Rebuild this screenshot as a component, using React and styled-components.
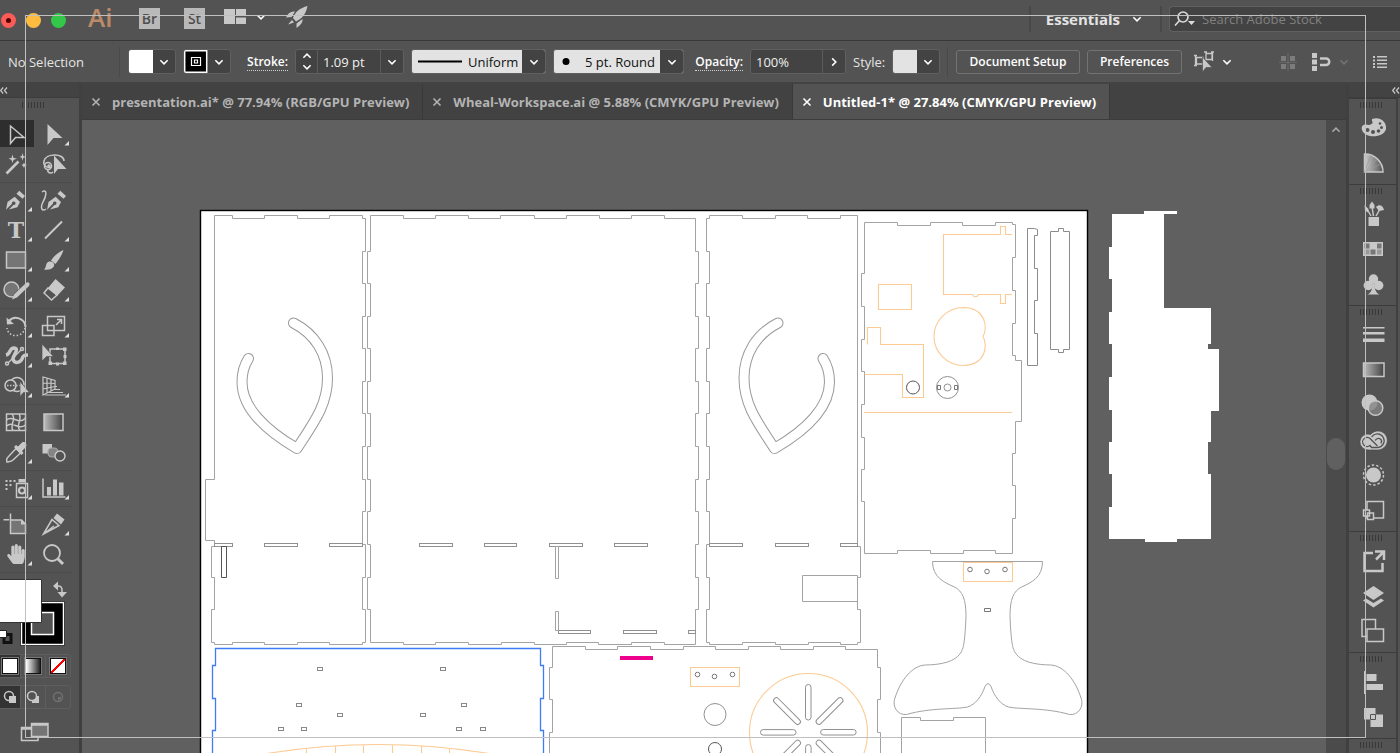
import React from 'react';
import styled, { createGlobalStyle } from 'styled-components';
import { FaHandPaper } from 'react-icons/fa';

const GlobalStyle = createGlobalStyle`
  * { box-sizing: border-box; }
  body {
    margin: 0;
    overflow: hidden;
    background: #535353;
    color: #e4e4e4;
    font-family: 'Open Sans', 'Noto Sans', sans-serif;
    font-size: 13px;
  }
  button, input, select {
    margin: 0;
    padding: 0;
    border: 0;
    border-radius: 0;
    background: none;
    color: inherit;
    font: inherit;
  }
  svg { display: block; }
`

const Screen = styled.div`
  position: relative;
  display: flex;
  flex-direction: column;
  height: 100vh;
  overflow: hidden;
`
const Guide = styled.div`
  position: absolute;
  top: 15px;
  right: 34px;
  bottom: 15px;
  left: 25px;
  border: 1px solid #c0c0c0;
  pointer-events: none;
`
const Defs = styled.svg`
  position: absolute;
  width: 0;
  height: 0;
`
const IconButton = styled.button`
  display: flex;
  align-items: center;
  justify-content: center;
  flex: none;
`
const Spacer = styled.div`
  flex: 1;
`

/* title bar */
const TitleBar = styled.header`
  display: flex;
  align-items: center;
  flex: none;
  height: 41px;
  padding: 0 0 3px 1px;
  border-bottom: 1px solid #383838;
`
const Lights = styled.div`
  display: flex;
  gap: 10px;
  padding-top: 3px;
`
const Light = styled.button`
  display: flex;
  align-items: center;
  justify-content: center;
  width: 15px;
  height: 15px;
  border-radius: 50%;
  background: ${({ $color }) => $color};
`
const LightDot = styled.span`
  width: 5px;
  height: 5px;
  border-radius: 50%;
  background: #4d0000;
`
const Logo = styled.div`
  width: 51px;
  margin-left: 22px;
  padding-bottom: 4px;
  color: #bd8a68;
  font-size: 26px;
  font-weight: 600;
  line-height: 32px;
`
const AppButtons = styled.div`
  display: flex;
  gap: 24px;
  margin-right: 19px;
`
const AppButton = styled.button`
  width: 21px;
  height: 21px;
  background: #b9b9b9;
  color: #4d4d4d;
  font-size: 14px;
  font-weight: 600;
  line-height: 21px;
  text-align: center;
`
const TitleButton = styled(IconButton)`
  gap: 10px;
  margin-right: 20px;
  padding-bottom: 4px;
`
const Workspace = styled.button`
  display: flex;
  align-items: center;
  gap: 12px;
  height: 26px;
  padding: 0 18px 0 15px;
  border: solid #484848;
  border-width: 0 2px;
  font-size: 15px;
  font-weight: 700;
`
const Search = styled.label`
  display: flex;
  align-items: center;
  flex: none;
  gap: 6px;
  width: 231px;
  height: 26px;
  margin-left: 7px;
  padding-left: 4px;
  border: 1px solid #606060;
  border-right: 0;
  border-radius: 4px 0 0 4px;
  background: #434343;
`
const SearchInput = styled.input`
  flex: 1;
  min-width: 0;
  &::placeholder {
    color: #808080;
    opacity: 1;
  }
`

/* control bar */
const ControlBar = styled.div`
  display: flex;
  align-items: center;
  flex: none;
  gap: 7px;
  height: 43px;
  padding-left: 8px;
  border-bottom: 2px solid #434343;
`
const Label = styled.label`
  flex: none;
  width: ${({ $width }) => $width}px;
  text-align: ${({ $align }) => $align || 'right'};
  white-space: nowrap;
`
const LinkLabel = styled(Label)`
  color: #fff;
  font-size: 12px;
  font-weight: 600;
  span { border-bottom: 1px dotted #cfcfcf; }
`
const Divider = styled.div`
  flex: none;
  width: 2px;
  height: 30px;
  border-left: 1px solid #494949;
`
const Field = styled.div`
  display: flex;
  flex: none;
  width: ${({ $width }) => $width}px;
  height: 25px;
  border: 1px solid #606060;
  border-radius: 3px;
  background: #434343;
  overflow: hidden;
`
const FieldInput = styled.input`
  flex: 1;
  min-width: 0;
  padding-left: 5px;
  color: #f0f0f0;
`
const FieldButton = styled(IconButton)`
  width: 23px;
  border-left: 1px solid #5c5c5c;
`
const Stepper = styled.div`
  display: flex;
  flex-direction: column;
  width: 22px;
  border-right: 1px solid #5c5c5c;
  ${IconButton} { flex: 1; }
`
const SwatchButton = styled.button`
  display: flex;
  align-items: center;
  justify-content: space-between;
  flex: none;
  width: 48px;
  height: 25px;
  padding-right: 6px;
  border: 1px solid #606060;
  border-radius: 3px;
  background: #434343;
  overflow: hidden;
`
const Picker = styled.div`
  display: grid;
  grid-template-columns: 56px 1fr 23px;
  align-items: center;
  flex: none;
  width: ${({ $width }) => $width}px;
  height: 25px;
  border: 1px solid #606060;
  border-radius: 3px;
  background: #e3e3e3;
  overflow: hidden;
  > svg {
    grid-area: 1 / 1;
    z-index: 1;
    pointer-events: none;
  }
`
const PickerSelect = styled.select`
  grid-area: 1 / 1 / 2 / 4;
  height: 23px;
  padding-left: ${({ $indent }) => $indent}px;
  appearance: none;
  color: #111;
`
const PickerArrow = styled.span`
  grid-area: 1 / 3;
  display: flex;
  align-items: center;
  justify-content: center;
  height: 23px;
  background: #434343;
  pointer-events: none;
`
const TextButton = styled.button`
  flex: none;
  width: ${({ $width }) => $width}px;
  height: 24px;
  border: 1px solid #737373;
  border-radius: 3px;
  color: #fff;
  font-size: 12px;
  font-weight: 600;
`
const BarTools = styled.div`
  display: flex;
  align-items: center;
  gap: ${({ $gap }) => $gap}px;
  padding: 0 13px 0 4px;
`
const SnapGroup = styled.div`
  display: flex;
  align-items: center;
  gap: 8px;
  padding-right: 9px;
`

/* body */
const Body = styled.div`
  display: flex;
  flex: 1;
  min-height: 0;
`
const PanelHead = styled.div`
  display: flex;
  justify-content: ${({ $right }) => ($right ? 'flex-end' : 'flex-start')};
  height: 14px;
  padding-top: 3px;
  border-bottom: 1px solid #3c3c3c;
  background: #434343;
`
const Grip = styled.div`
  width: 24px;
  height: 6px;
  background: repeating-linear-gradient(90deg, #383838 0 1px, #535353 1px 3px);
`
const ToolPanel = styled.aside`
  flex: none;
  width: 82px;
  border-right: 3px solid #404040;
  overflow: hidden;
  > ${Grip} { margin: 4px 0 11px 22px; }
`
const ToolGroup = styled.div`
  display: grid;
  grid-template-columns: 37px 37px;
  width: 72px;
  margin-bottom: 2px;
  padding-bottom: 3px;
  border-bottom: 1px solid #4b4b4b;
`
const ToolButton = styled.button`
  width: 34px;
  height: 30px;
  background: ${({ $active }) => ($active ? 'linear-gradient(#2e2e2e, #2e2e2e) 0 1px / 34px 27px no-repeat' : 'none')};
`
const Modes = styled.div`
  display: flex;
  width: 71px;
  height: 24px;
  margin-bottom: 7px;
  border: 1px solid #5e5e5e;
  border-left: 0;
  border-radius: 0 3px 3px 0;
`
const Mode = styled.button`
  display: flex;
  align-items: center;
  justify-content: center;
  flex: ${({ $active }) => ($active ? '0 0 21px' : '1')};
  border-right: 1px solid #5e5e5e;
  background: ${({ $active }) => ($active ? '#333' : 'none')};
  &:last-child { border-right: 0; }
`
const ModeSwatch = styled.span`
  width: 16px;
  height: 16px;
  border: 1px solid #111;
  outline: 1px solid #777;
  background: ${({ $fill }) => $fill};
`
const Center = styled.main`
  display: flex;
  flex-direction: column;
  flex: 1;
  min-width: 0;
`
const Tabs = styled.nav`
  display: flex;
  flex: none;
  height: 36px;
  border-bottom: 1px solid #3c3c3c;
  background: #424242;
`
const Tab = styled.div`
  display: flex;
  align-items: center;
  padding: 0 13px 0 9px;
  border-right: 1px solid #393939;
  background: ${({ $active }) => ($active ? '#535353' : 'none')};
  color: ${({ $active }) => ($active ? '#fff' : '#b4b4b4')};
`
const TabLink = styled.a`
  padding-left: 11px;
  color: inherit;
  font-weight: 700;
  text-decoration: none;
  white-space: nowrap;
`
const Stage = styled.div`
  display: flex;
  flex: 1;
  min-height: 0;
`
const Canvas = styled.div`
  flex: 1;
  min-width: 0;
  background: #606060;
  overflow: hidden;
`
const ScrollTrack = styled.div`
  display: flex;
  flex-direction: column;
  align-items: center;
  flex: none;
  width: 20px;
  padding-top: 5px;
  background: #4b4b4b;
`
const ScrollThumb = styled.div`
  width: 18px;
  height: 32px;
  margin-top: 303px;
  border-radius: 9px;
  background: #606060;
`
const Dock = styled.aside`
  flex: none;
  width: 54px;
  border-left: 3px solid #404040;
  overflow: hidden;
`
const DockBody = styled.div`
  width: 49px;
  border-right: 2px solid #404040;
`
const DockGroup = styled.div`
  display: flex;
  flex-direction: column;
  align-items: center;
  padding: 3px 1px 3px 0;
  border-top: 1px solid #3c3c3c;
  > ${Grip} { margin-bottom: 3px; }
`
const DockButton = styled.button`
  width: 34px;
  height: 35px;
`

const C = '#c8c8c8'

const Chevron = ({ dir = 'down', color = '#fff', w = 10 }) => {
  const paths = {
    down: 'M1 3.5 5 7.5 9 3.5',
    up: 'M1 7.5 5 3.5 9 7.5',
    right: 'M3 1.5 7 5.5 3 9.5',
  }
  return (
    <svg width={w} height={w} viewBox='0 0 10 11' fill='none' stroke={color} strokeWidth='1.7'>
      <path d={paths[dir]} />
    </svg>
  )
}

const Collapse = () => (
  <svg width='8' height='7' viewBox='0 0 8 7' fill='none' stroke={C} strokeWidth='1.2'>
    <path d='M3.2 .5 .6 3.5 3.2 6.500M7 .5 4.400 3.500 7 6.500' />
  </svg>
)

const Nib = () => (
  <g fill={C}>
    <path fillRule='evenodd' d='M6 25 7.5 17 14.7 11.7 20 17 17.3 22.2 9 24.6 13.3 20A1.8 1.8 0 1 0 12 18.8L7.2 23.6Z' />
    <path d='M16.5 8.7 19.3 5.7 25 11 22.6 13.7Z' />
  </g>
)

const line = { fill: 'none', stroke: C, strokeWidth: 1.5 }

/* tool drawings, one 34x30 cell each; `more` adds the flyout corner */
const toolGroups = [
  [
    { name: 'Selection', active: true, art: <path {...line} d='M10.5 7V24.5L15.5 18.5H24Z' /> },
    { name: 'Direct Selection', more: true, art: <path fill={C} d='M10.5 5V26L16.5 19H25.5Z' /> },
    { name: 'Magic Wand', art: (
      <g fill={C}>
        <path d='M6.5 24.5 18.5 12.5' stroke={C} strokeWidth='2.6' />
        <path d='M12.5 5.5 13.5 9 17 9.5 13.5 11 12.5 14 11.5 11 8.5 9.5 11.5 9ZM22.5 4 23.3 7 26 8 23.3 8.8 22.5 11.5 21.7 8.8 19.5 8 21.7 7ZM24 13.5 24.8 15.3 27 16 24.8 17 24 19 23 17 21.5 16 23.2 15.3Z' />
      </g>
    ) },
    { name: 'Lasso', art: (
      <g {...line}>
        <path d='M14 18.5C9 19 6 16 7 12 9 4 27 4 27 12' />
        <circle cx='11' cy='17' r='3.5' />
        <circle cx='12' cy='17' r='1' />
        <path d='M11 20.5C10 24 14 25 16 23' />
        <path fill={C} stroke='none' d='M17 6.5V25L21 20H29.5Z' />
      </g>
    ) },
  ],
  [
    { name: 'Pen', more: true, art: <Nib /> },
    { name: 'Curvature', art: (
      <g>
        <g transform='translate(4)'><Nib /></g>
        <path {...line} d='M5 7C11 3 9 12 6 17 3 23 5 27 9 24' />
      </g>
    ) },
    { name: 'Type', more: true, art: <text x='16' y='23' textAnchor='middle' fill={C} fontFamily='DejaVu Serif' fontWeight='700' fontSize='22'>T</text> },
    { name: 'Line Segment', more: true, art: <path {...line} strokeWidth='1.9' d='M8 23.5 25 6.5' /> },
    { name: 'Rectangle', more: true, art: <rect {...line} fill='#757575' x='6.5' y='7' width='19' height='16' /> },
    { name: 'Paintbrush', more: true, art: (
      <g fill={C}>
        <path d='M7 24.5C10 22 8 18 12 16.5 16 16 18.5 19 16.5 22 14 25 10 25 7 24.5Z' />
        <path d='M14 15.5C18 10 22 7 26.5 5 25 10 22 14.5 18.5 19Z' />
      </g>
    ) },
    { name: 'Blob Brush', more: true, art: (
      <g>
        <circle {...line} fill='#757575' cx='11.5' cy='14.5' r='7.5' />
        <path d='M14.5 22.5 27.5 10' stroke='#535353' strokeWidth='6' />
        <path d='M12 24.5 14 19.5 26 8C28.5 6 31 9 28.5 11.5L17 22.5Z' fill={C} />
      </g>
    ) },
    { name: 'Eraser', more: true, art: (
      <g>
        <path d='M11 13 18.5 4 28 12.5 20 21Z' fill={C} />
        <path {...line} d='M11 13 7 18 14.5 25 20 20Z' />
      </g>
    ) },
  ],
  [
    { name: 'Rotate', more: true, art: (
      <g {...line}>
        <path d='M9 10C14 4 25 7 25.5 16' strokeWidth='2' />
        <path d='M25 17C23 27 8 27 7 17' strokeDasharray='1.5 2' />
        <path fill={C} stroke='none' d='M6.5 6.5 7 13.5 14 13Z' />
      </g>
    ) },
    { name: 'Scale', more: true, art: (
      <g {...line}>
        <path d='M10.5 5.5H27.5V19.5H10.5ZM5.5 14.5H17V24.5H5.5Z' />
        <path d='M19 14 24 9M20 8.5H24.5V13' />
      </g>
    ) },
    { name: 'Width', more: true, art: (
      <g fill='none'>
        <path stroke={C} strokeWidth='3.5' d='M6 14C11 13 9 7 14 7 20 8 13 14 13 18 14 23 20 22 22 18 23 14 25 14 28 14' />
        <path stroke={C} strokeWidth='1.2' d='M7 23 22 8' />
        <circle {...line} fill='#535353' cx='7' cy='22.5' r='1.5' />
        <circle {...line} fill='#535353' cx='22' cy='8' r='1.5' />
      </g>
    ) },
    { name: 'Free Transform', art: (
      <g>
        <path {...line} d='M13 8H28V22.5H13Z' />
        <path d='M11.5 20.5h3.5v3.5h-3.5zM26 20.5h3.5v3.5H26zM26 6.5h3.5V10H26zM19 6.5h3V9h-3zM19 21.5h3v3h-3zM26.5 14h3v3h-3z' fill={C} />
        <path d='M5 3V20L9.5 15.5H16.5Z' fill={C} stroke='#535353' strokeWidth='.7' />
      </g>
    ) },
    { name: 'Shape Builder', more: true, art: (
      <g {...line}>
        <circle cx='17' cy='13.5' r='7' />
        <circle cx='10.5' cy='14.5' r='5.5' fill='#535353' />
        <path d='M7 14.5H20' strokeDasharray='1.5 1.5' />
        <path fill={C} stroke='#535353' strokeWidth='.7' d='M20 10.5V25.5L23.5 21.5H29.5Z' />
      </g>
    ) },
    { name: 'Perspective Grid', more: true, art: (
      <g {...line} strokeWidth='1.2'>
        <path d='M6 6V24L18 18V9.5ZM6 12 18 12.5M6 18 18 15.5M10 7V22M14 8V20' />
        <path d='M18 15.5H20M17 18.5H23M12 21.5H26M8 24H29' />
      </g>
    ) },
  ],
  [
    { name: 'Mesh', art: (
      <g {...line}>
        <path d='M6.5 7H25.5V23.5H6.5Z' />
        <path d='M6.5 13C13 7 18 19 25.5 11M6.5 19C13 13 18 24 25.5 18M12 7C17 12 9 18 13 23.5M19 7C23 12 15 18 20 23.5' />
      </g>
    ) },
    { name: 'Gradient', art: <rect x='7' y='7' width='19' height='16.5' fill='url(#dark)' stroke={C} strokeWidth='1.5' /> },
    { name: 'Eyedropper', more: true, art: (
      <g>
        <path {...line} d='M7 25C6 22 7 21 9 19L16 11.5 20.5 16 13 23C11 25 9 24.5 7 25Z' />
        <path fill={C} d='M14 10 16 8 18 9.5 22 5.5C25 4 27.5 7 26 10L22 14 23.5 16 21.5 18Z' />
      </g>
    ) },
    { name: 'Blend', art: (
      <g>
        <path fill={C} d='M5.5 7H15V16.5H5.5Z' />
        <rect x='11' y='11' width='10' height='9' rx='4' fill='#858585' stroke='#a8a8a8' strokeWidth='1.2' />
        <circle {...line} fill='#535353' cx='23' cy='19' r='5' />
      </g>
    ) },
  ],
  [
    { name: 'Symbol Sprayer', more: true, art: (
      <g fill={C}>
        <path d='M5.5 7h2v2h-2zM9.5 7h2v2h-2zM13.5 7h2v2h-2zM5.5 11h2v2h-2zM9.5 11h2v2h-2zM5.5 15h2v2h-2zM18.5 6H25v3.5h-6.5z' />
        <path {...line} d='M16.5 10.5H27.5V24.5H16.5Z' />
        <circle cx='22' cy='17.5' r='3' fill='none' stroke={C} strokeWidth='2.2' />
      </g>
    ) },
    { name: 'Column Graph', more: true, art: (
      <g fill={C}>
        <path {...line} d='M6 5.5V24H28.5' />
        <path d='M10 14h4v8.5h-4zM16 6.5h4v16h-4zM22 9.5h4.5v13H22z' />
      </g>
    ) },
  ],
  [
    { name: 'Artboard', art: (
      <g {...line}>
        <path fill='#757575' d='M10.5 11H21.5L25.5 15V24.5H10.5Z' />
        <path d='M10.5 4.5V11M3.5 10.7H9' />
        <path fill={C} stroke='none' d='M21 11 25.5 15.5H21Z' />
      </g>
    ) },
    { name: 'Slice', more: true, art: (
      <g>
        <path {...line} d='M6.5 25 15 10.5 22 16.5ZM6.5 25 17 17' />
        <path fill={C} d='M16.5 9 20 4.5 27.5 10.5 24 15.5Z' />
      </g>
    ) },
    { name: 'Hand', more: true, art: <FaHandPaper x='6' y='5' size={20} color={C} /> },
    { name: 'Zoom', art: (
      <g {...line}>
        <circle cx='15' cy='14' r='8' strokeWidth='1.8' />
        <path d='M20.5 19.5 26 25' strokeWidth='3' />
      </g>
    ) },
  ],
]

const dockGroups = [
  [
    { name: 'Color', art: (
      <g>
        <path fill={C} d='M17 8C26 5 32 12 31 18 29 26 16 27 10 23 5 19 6 13 11 13.5 16 15 19 12 17 10Z' />
        <g fill='#535353'>
          <circle cx='12.5' cy='19' r='2' /><circle cx='18' cy='21' r='2' /><circle cx='23.5' cy='20' r='1.8' /><circle cx='26.5' cy='16.5' r='1.5' /><circle cx='25' cy='12.5' r='1.3' />
        </g>
      </g>
    ) },
    { name: 'Color Guide', art: (
      <g>
        <path d='M9.5 26V8A18 18 0 0 1 28 26Z' fill='url(#fan)' stroke={C} strokeWidth='1.5' />
        <path d='M9.5 26 16 9M9.5 26 22 13M9.5 26 26 18' stroke='#999' strokeWidth='.7' />
      </g>
    ) },
  ],
  [
    { name: 'Brushes', art: (
      <g fill={C}>
        <path d='M13.5 20H24V29H13.5Z' />
        <path d='M16 19 12 12M18.5 19 17 10M21 19 25 12' stroke={C} strokeWidth='1.5' />
        <path d='M9.5 8 13.5 12 13 15.5 10 13.5ZM14.5 8 17 4.5 19.5 8V11.5H14.5ZM21 10C24 7 28 8 29 13L24 14Z' />
      </g>
    ) },
    { name: 'Swatches', art: (
      <g>
        <path fill={C} d='M8 10H28V24H8Z' />
        <path fill='#777' d='M9.5 11.5h5v5h-5zM22 11.5h4.5v5H22zM15.5 17.5h5v5h-5z' />
        <path fill='#999' d='M9.5 17.5h5v5h-5zM22 17.5h4.5v5H22z' />
      </g>
    ) },
    { name: 'Symbols', art: (
      <g fill={C}>
        <circle cx='18.5' cy='12' r='4.7' /><circle cx='13.3' cy='18.5' r='4.7' /><circle cx='23.7' cy='18.5' r='4.7' />
        <path d='M17.5 15H19.5C19.5 22 20.5 25.5 24.5 27.5H12.5C16.5 25.5 17.5 22 17.5 15Z' />
      </g>
    ) },
  ],
  [
    { name: 'Stroke', art: <path fill={C} d='M8 9H29.5V10.5H8ZM8 14H29.5V16.5H8ZM8 20.5H29.5V24H8Z' /> },
    { name: 'Gradient panel', art: <rect x='8.5' y='10' width='20.5' height='13.5' fill='url(#dark)' stroke={C} strokeWidth='1.5' /> },
    { name: 'Transparency', art: (
      <g>
        <circle cx='14.5' cy='14.5' r='8' fill={C} />
        <circle cx='20.5' cy='20' r='7.3' fill='#858585' fillOpacity='.8' stroke={C} strokeWidth='1.5' />
      </g>
    ) },
    { name: 'Libraries', art: (
      <g fill='none' strokeLinecap='round'>
        <path fill={C} stroke='#3f3f3f' strokeWidth='.6' d='M14 27A8 8 0 1 1 15.5 11.5 9.500 9.500 0 1 1 23 27Z' />
        <path stroke='#535353' strokeWidth='1.3' d='M22 22.500 15.500 16A4.500 4.500 0 1 0 15 22.500L16.500 24.500H23A6.800 6.800 0 1 0 17 13.500M20.500 17C24 13.500 28 17 26 20' />
      </g>
    ) },
    { name: 'Appearance', art: (
      <g>
        <circle cx='18.5' cy='17' r='7.5' fill={C} />
        <circle cx='18.5' cy='17' r='10' {...line} strokeDasharray='2.5 2' />
      </g>
    ) },
    { name: 'Graphic Styles', art: (
      <g {...line}>
        <path d='M12 8.5H28.5V25H12Z' />
        <path fill='#535353' d='M12.5 20H18.5V26.5H12.5ZM8.5 17H14.5V23H8.5Z' />
      </g>
    ) },
  ],
  [
    { name: 'Asset Export', art: <path fill='none' stroke={C} strokeWidth='2.5' d='M18 9H9.5V27H27.5V19M20 7.5H29V16M29 7.5 21 15.5' /> },
    { name: 'Layers', art: (
      <g fill={C}>
        <path d='M18.5 7 29 14 18.5 21 8 14Z' />
        <path d='M8 21.5 11 19.5 18.5 24 26 19.5 29 21.5 18.5 28.5Z' />
      </g>
    ) },
    { name: 'Artboards', art: <path {...line} fill='#535353' d='M12 22.5H7V5.5H20.5V15M12 15H28.5V27.5H12Z' /> },
  ],
  [
    { name: 'Align', art: <path fill={C} d='M9 6H10.5V29H9ZM11.5 9H21.5V16H11.5ZM11.5 19H28V25H11.5Z' /> },
    { name: 'Pathfinder', art: (
      <g>
        <path fill={C} d='M9 8H20.5V19.5H9ZM15.5 14.5H28V27H15.5Z' />
        <path fill={C} stroke='#535353' d='M15.5 14.5H20.5V19.5H15.5Z' />
      </g>
    ) },
  ],
  [],
]

/* finger joints shared by the three tall panels */
const joints = [251, 283, 316, 348, 381, 413, 446, 479, 511, 544, 577, 609]
const wall = (a, b, up) => {
  const ys = up ? [...joints].reverse() : joints
  return ys.map((y, i) => `V${y}H${i % 2 ? a : b}`).join('')
}

const leftPanel = `M214 215H232V218H264V215H297V218H329V215H362V218H365${wall(365, 362)}V642H362V644H329V642H297V644H264V642H232V644H214V642H211V609H214V577H211V546H214V540H205V479H214Z`
const midPanel = `M370 215H403V218H435V215H468V218H500V215H534V218H566V215H599V218H631V215H664V218H695${wall(695, 698)}V644H664V642H631V644H598V642H566V644H534V642H501V644H468V642H435V644H403V642H370${wall(370, 367, true)}Z`
const rightPanel = `M709 215H742V218H775V215H807V218H840V215H857V546H860V577H857V609H860V642H857V644H840V642H808V644H775V642H742V644H709V642H706${wall(706, 709, true)}V218H709Z`
const sidePanel = 'M864 222H897V225H930V222H962V225H995V222H1012V224H1015V257H1012V290H1015V323H1012V355H1015V360H1021V421H1015V453H1012V485H1015V518H1012V553H995V550H963V553H930V550H897V553H864V501H861V469H864V437H861V404H864V371H861V339H864V306H861V273H864Z'
const handle = 'M293.5 323C315 334 327.5 354 327.5 378C327.5 404 315 421 297 448.5C265 430 242 407 242 382C242 372 245 364 248.5 358.5'
const foot = 'M932 561H1042C1042 577 1031 582 1021 586.5C1013 590.5 1009.5 599 1009.5 615C1010 630 1011 640 1012 645C1014 656 1023 664 1050 664.5C1063 665 1075 679 1081 699C1083 706 1078 715 1069 714C1045 707 1020 709 1008 706.5C1000 704 994 696 990.5 686Q987.5 680 984.5 686C981 696 975 704 967 706.5C955 709 930 707 906 714C897 715 892 706 894 699C900 679 912 665 925 664.5C952 664 961 656 963 645C964 640 965 630 965.5 615C965.5 599 962 590.5 954 586.5C944 582 932 577 932 561Z'
const slots = [
  [214, 543, 18], [264, 543, 33], [329, 543, 33], [419, 543, 33], [484, 543, 32], [549, 543, 33], [614, 543, 33],
  [709, 543, 33], [775, 543, 33], [840, 543, 17], [558, 630, 32], [623, 630, 33], [688, 630, 7],
]
const pegs = [
  [320, 669], [443, 669], [299, 705], [464, 705], [340, 715], [423, 715], [281, 729], [304, 729], [459, 729], [483, 729],
]
const screws = [[970, 569.5], [987, 571.5], [1005, 569.5], [697.5, 674.5], [714.5, 676.5], [732.5, 674.5]]

const Handle = () => (
  <g fill='none' strokeLinecap='round' strokeLinejoin='round'>
    <path d={handle} stroke='#999' strokeWidth='11' />
    <path d={handle} stroke='#fff' strokeWidth='9' />
  </g>
)

const Artwork = () => (
  <svg width='1244' height='633' viewBox='82 120 1244 633'>
    <path d='M1112 214H1144V211H1177V214H1164V308H1211V344H1208V349H1219V411H1211V442H1208V474H1211V507H1208V507H1211V539H1177V542H1145V539H1109V507H1112V474H1109V442H1112V410H1109V377H1112V344H1109V312H1112V279H1109V247H1112Z' fill='#fff' />
    <rect x='200.5' y='210.5' width='887' height='560' fill='#fff' stroke='#000' strokeWidth='1.4' />
    <g fill='none' stroke='#a3a3a3' transform='translate(.5 .5)'>
      <path d={leftPanel} />
      <path d={midPanel} />
      <path d={rightPanel} />
      <path d={sidePanel} />
      {slots.map(([x, y, w]) => <rect key={`${x}-${y}`} x={x} y={y} width={w} height='3' stroke='#909090' />)}
      <path d='M221 546H226V577H221Z' stroke='#555' />
      <path d='M555 546H558V578H555ZM555 611H558V630H555ZM802 575H857V601H802Z' />
      <path d='M1027 228H1034L1037 229V235H1034V268H1037V300H1034V333H1037V365H1027Z' stroke='#8c8c8c' />
      <path d='M1050 231H1058V228H1063V231H1069V349H1063V352H1058V349H1050Z' stroke='#8c8c8c' />
      <path d={foot} />
      <path d='M901 760V717H920V720H953V717H985V760' />
      <path d='M549 760V732H552V699H549V667H552V646H585V649H617V646H650V649H683V646H715V649H748V646H780V649H813V646H845V649H877V667H880V699H877V732H880V760' />
      <path d='M984 608H990V611H984Z' stroke='#777' />
      {pegs.map(([x, y]) => <rect key={`${x}-${y}`} x={x - 3} y={y - 2} width='5' height='3' stroke='#888' />)}
    </g>
    <Handle />
    <g transform='translate(1071.5) scale(-1 1)'><Handle /></g>
    <g fill='none' stroke='#909090'>
      <circle cx='913' cy='387.5' r='6.5' stroke='#555' />
      <circle cx='947.5' cy='387.5' r='11' />
      <circle cx='947.5' cy='387.5' r='3.5' />
      <path d='M937.5 385.5h3v4h-3zM954.5 385.5h3v4h-3z' stroke='#777' />
      <circle cx='715' cy='714.5' r='11' />
      <circle cx='715' cy='749' r='6.5' stroke='#555' />
      {screws.map(([x, y]) => <circle key={x} cx={x} cy={y} r='2.3' stroke='#777' />)}
      {[0, 45, 90, 135, 180, 225, 270, 315].map((deg) => (
        <rect key={deg} x='805.5' y='684.5' width='5.5' height='35.5' rx='2.7' transform={`rotate(${deg} 808.3 732.3)`} />
      ))}
    </g>
    <g fill='none' stroke='#fccb94' strokeWidth='1.1'>
      <path d='M1012 234.5H1005.5V226.5H1000.5V234.5H943.5V294.5H972.5L974 296.5H977L978.5 294.5H1000.5V303.5H1005.5V294.5H1012' />
      <path d='M878.5 284.5H911.5V309.5H878.5ZM867.5 344.5V327.5H880.5V344.5H923.5V397.5H902.5V374.5H864.5M864 412.5H1012' />
      <path d='M983 336.5C988 328 986 308 963.5 307.5C947 307.5 934 321 934 336.5C934 352 947 365.5 963.5 365.5C986 365 988 345 983 336.5Z' />
      <path d='M963.5 562.5H1012.5V581.5H963.5ZM690.5 667.5H739.500V686.5H690.5Z' />
      <circle cx='808.5' cy='732.5' r='59' />
      <path d='M258 755Q378 734 498 755M306.5 748V760M335.5 746V760M363.5 745V760M392.5 745V760M421.5 746V760M449.5 748V760' />
    </g>
    <path d='M620 656H653V660H620Z' fill='#ec008c' />
    <path d='M212.5 760V730.5H215.5V698.5H212.5V665.5H215.5V648.5H540.5V665.5H543.5V698.5H540.5V730.5H543.5V760' fill='none' stroke='#3f7cf6' strokeWidth='1.3' />
  </svg>
)

const ColorBox = () => (
  <svg width='74' height='79' viewBox='0 2 74 79'>
    <path d='M56 13H58Q62 13 62 17V21' {...line} />
    <path d='M53 13 58 8.5V17.5ZM57.5 19H67L62 24.5Z' fill={C} />
    <path d='M21.5 29.5H63.5V71.5H21.5ZM31.5 39.5V61.5H53.5V39.5Z' fillRule='evenodd' fill='#000' stroke='#fff' strokeWidth='1.5' />
    <path d='M20.5 28.5H64.5V72.5H20.5Z' fill='none' stroke='#222' strokeWidth='.7' />
    <path d='M-2 6.5H41.5V49.5H-2Z' fill='#fff' stroke='#333' />
    <path d='M4 61.5H11V69.5H4Z' fill='none' stroke='#111' strokeWidth='3' />
    <path d='M-1 57.5H6.5V64.5H-1Z' fill='#fff' stroke='#222' />
  </svg>
)

const CloseIcon = () => (
  <svg width='10' height='10' viewBox='0 0 10 10' fill='none' stroke='currentColor' strokeWidth='1.6'>
    <path d='M1.5 1.5 8.5 8.5M8.5 1.5 1.5 8.5' />
  </svg>
)

const tabs = [
  { title: 'presentation.ai* @ 77.94% (RGB/GPU Preview)' },
  { title: 'Wheal-Workspace.ai @ 5.88% (CMYK/GPU Preview)' },
  { title: 'Untitled-1* @ 27.84% (CMYK/GPU Preview)', active: true },
]

const App = () => (
  <Screen>
    <GlobalStyle />
    <Defs>
      <defs>
        <linearGradient id='dark'><stop stopColor='#bbb' /><stop offset='1' stopColor='#444' /></linearGradient>
        <linearGradient id='fan'><stop stopColor='#ccc' /><stop offset='1' stopColor='#555' /></linearGradient>
      </defs>
    </Defs>
    <TitleBar>
      <Lights>
        <Light $color='#fc5b57' aria-label='Close'><LightDot /></Light>
        <Light $color='#fdbc40' aria-label='Minimize' />
        <Light $color='#34c84a' aria-label='Zoom' />
      </Lights>
      <Logo>Ai</Logo>
      <AppButtons>
        <AppButton>Br</AppButton>
        <AppButton>St</AppButton>
      </AppButtons>
      <TitleButton aria-label='Arrange documents'>
        <svg width='22' height='15' viewBox='0 0 22 15' fill={C}><path d='M0 0H11V15H0ZM12 0H22V7H12ZM12 8.5H22V15H12Z' /></svg>
        <Chevron />
      </TitleButton>
      <TitleButton aria-label='GPU performance'>
        <svg width='22' height='22' viewBox='0 0 22 22' fill={C}>
          <path d='M21.5 0C14 2 9 6 7 12L10 15.5C16 12.5 20 8 21.5 0ZM9 5.5C5 5.5 2 7 0 11.5L5.5 11ZM16.5 13C17 16 15 19 10.5 22V17.5ZM6 14 8 16.5 2 18.5Z' />
        </svg>
      </TitleButton>
      <Spacer />
      <Workspace>Essentials <Chevron /></Workspace>
      <Search>
        <svg width='22' height='16' viewBox='0 0 22 16' fill='none' stroke='#ddd' strokeWidth='1.6'>
          <circle cx='9' cy='6' r='5' /><path d='M5.5 9.5 1 14.5' /><path d='M14 10H21L17.5 14Z' fill='#ddd' stroke='none' />
        </svg>
        <SearchInput placeholder='Search Adobe Stock' aria-label='Search Adobe Stock' />
      </Search>
    </TitleBar>

    <ControlBar>
      <Label as='div' $width={104} $align='left'>No Selection</Label>
      <Divider />
      <SwatchButton aria-label='Fill'>
        <svg width='24' height='23'><path d='M0 0H24V23H0Z' fill='#fff' /></svg>
        <Chevron />
      </SwatchButton>
      <SwatchButton aria-label='Stroke color'>
        <svg width='24' height='23' fill='none' stroke='#fff'>
          <path d='M.7 .7H22.7V22.3H.7Z' fill='#000' strokeWidth='1.5' />
          <path d='M7.5 7.5H16.5V15.5H7.5Z' strokeWidth='1.2' /><path d='M10.5 10H13.5V13H10.5Z' strokeWidth='1.2' />
        </svg>
        <Chevron />
      </SwatchButton>
      <LinkLabel htmlFor='stroke' $width={50}><span>Stroke:</span></LinkLabel>
      <Field $width={109}>
        <Stepper>
          <IconButton aria-label='Increase'><Chevron dir='up' /></IconButton>
          <IconButton aria-label='Decrease'><Chevron /></IconButton>
        </Stepper>
        <FieldInput id='stroke' defaultValue='1.09 pt' />
        <FieldButton aria-label='Stroke presets'><Chevron /></FieldButton>
      </Field>
      <Picker $width={135}>
        <PickerSelect $indent={56} aria-label='Width profile'><option>Uniform</option></PickerSelect>
        <svg width='56' height='23'><path d='M6 11.5H50' stroke='#000' strokeWidth='2' /></svg>
        <PickerArrow><Chevron /></PickerArrow>
      </Picker>
      <Picker $width={131}>
        <PickerSelect $indent={31} aria-label='Brush'><option>5 pt. Round</option></PickerSelect>
        <svg width='56' height='23'><circle cx='12' cy='11.5' r='3.5' /></svg>
        <PickerArrow><Chevron /></PickerArrow>
      </Picker>
      <LinkLabel htmlFor='opacity' $width={52}><span>Opacity:</span></LinkLabel>
      <Field $width={96}>
        <FieldInput id='opacity' defaultValue='100%' />
        <FieldButton aria-label='Opacity presets'><Chevron dir='right' /></FieldButton>
      </Field>
      <Label htmlFor='style' $width={32}>Style:</Label>
      <SwatchButton id='style'>
        <svg width='24' height='23'><path d='M0 0H24V23H0Z' fill='#e3e3e3' /></svg>
        <Chevron />
      </SwatchButton>
      <Divider />
      <TextButton $width={124}>Document Setup</TextButton>
      <TextButton $width={95}>Preferences</TextButton>
      <BarTools $gap={7}>
        <IconButton aria-label='Select similar'>
          <svg width='22' height='22' viewBox='0 0 22 22' {...line}>
            <path d='M3.5 6.5H10V13H3.5ZM13 2.5H19V8.5H13ZM1 4.5H4M1 14.5H4M2.5 4V15M11 1H14M18 1H21M19.5 1V10' strokeWidth='1.3' />
            <path d='M9.5 6V21L13 16.5H19Z' fill={C} stroke='#535353' strokeWidth='.7' />
          </svg>
        </IconButton>
        <IconButton aria-label='Select similar options'><Chevron /></IconButton>
      </BarTools>
      <Spacer />
      <BarTools $gap={15}>
        <IconButton aria-label='Align to pixel grid'>
          <svg width='18' height='18' viewBox='0 0 18 18' fill='#7c7c7c'><path d='M2 3H7V8H2ZM11 3H16V8H11ZM2 11H7V16H2ZM11 11H16V16H11ZM8.7 0H9.3V18H8.7ZM0 9.2H18V9.8H0Z' /></svg>
        </IconButton>
        <SnapGroup>
          <IconButton aria-label='Snap options'>
            <svg width='19' height='18' viewBox='0 0 19 18' fill={C}><path d='M0 0H5V5H0ZM0 6.5H5V11.5H0ZM0 13H5V18H0Z' /><path d='M8 5.5H14A3.2 3.2 0 0 1 14 12H8' fill='none' stroke={C} strokeWidth='2.5' /></svg>
          </IconButton>
          <Chevron color='#747474' />
        </SnapGroup>
        <IconButton aria-label='Panel menu'>
          <svg width='14' height='12' viewBox='0 0 14 12' fill={C}><path d='M0 0H2V2H0ZM4 0H14V1.5H4ZM0 3.5H2V5.5H0ZM4 3.5H14V5H4ZM0 7H2V9H0ZM4 7H14V8.5H4ZM0 10H2V12H0ZM4 10.5H14V12H4Z' /></svg>
        </IconButton>
      </BarTools>
    </ControlBar>

    <Body>
      <ToolPanel>
        <PanelHead><Collapse /></PanelHead>
        <Grip />
        {toolGroups.map((group) => (
          <ToolGroup key={group[0].name}>
            {group.map((tool) => (
              <ToolButton key={tool.name} $active={tool.active} aria-label={tool.name}>
                <svg width='34' height='30' viewBox='0 0 34 30'>
                  {tool.art}
                  {tool.more && <path d='M32 22V26.5H27.5Z' fill='#ddd' />}
                </svg>
              </ToolButton>
            ))}
          </ToolGroup>
        ))}
        <ColorBox />
        <Modes>
          <Mode $active aria-label='Color'><ModeSwatch $fill='#fff' /></Mode>
          <Mode aria-label='Gradient'><ModeSwatch $fill='linear-gradient(90deg, #fff, #222)' /></Mode>
          <Mode aria-label='None'><ModeSwatch $fill='linear-gradient(135deg, #fff 43%, #f00 43% 57%, #fff 57%)' /></Mode>
        </Modes>
        <Modes>
          <Mode $active aria-label='Draw normal'>
            <svg width='14' height='14' {...line}><circle cx='6' cy='6' r='4.5' /><path d='M6 6H13V13H6Z' fill={C} stroke='none' /></svg>
          </Mode>
          <Mode aria-label='Draw behind'>
            <svg width='14' height='14' {...line}><path d='M6 6H13V13H6Z' fill={C} stroke='none' /><circle cx='6' cy='6' r='4.5' fill='#535353' /></svg>
          </Mode>
          <Mode aria-label='Draw inside'>
            <svg width='14' height='14' {...line} stroke='#707070'><circle cx='7' cy='7' r='4.5' /><path d='M7 7H10V9L8 10H7Z' fill='#707070' stroke='none' /></svg>
          </Mode>
        </Modes>
        <ToolButton aria-label='Change screen mode'>
          <svg width='50' height='24' {...line}>
            <path d='M21.5 8.5H38V21.5H21.5Z' /><path d='M31.5 4.5H48V17.5H31.5Z' fill='#757575' /><path d='M31.5 5.5H48M21.5 9.5H31' strokeWidth='2.5' />
          </svg>
        </ToolButton>
      </ToolPanel>

      <Center>
        <Tabs>
          {tabs.map((tab) => (
            <Tab key={tab.title} $active={tab.active}>
              <IconButton aria-label='Close tab'><CloseIcon /></IconButton>
              <TabLink href='#'>{tab.title}</TabLink>
            </Tab>
          ))}
        </Tabs>
        <Stage>
          <Canvas><Artwork /></Canvas>
          <ScrollTrack>
            <Chevron dir='up' color='#a8a8a8' />
            <ScrollThumb />
          </ScrollTrack>
        </Stage>
      </Center>

      <Dock>
        <PanelHead $right><Collapse /></PanelHead>
        <DockBody>
          {dockGroups.map((group, i) => (
            <DockGroup key={i}>
              <Grip />
              {group.map((item) => (
                <DockButton key={item.name} aria-label={item.name}>
                  <svg width='34' height='35' viewBox='0 0 34 35'>{item.art}</svg>
                </DockButton>
              ))}
            </DockGroup>
          ))}
        </DockBody>
      </Dock>
    </Body>
    <Guide />
  </Screen>
);

export default App;
